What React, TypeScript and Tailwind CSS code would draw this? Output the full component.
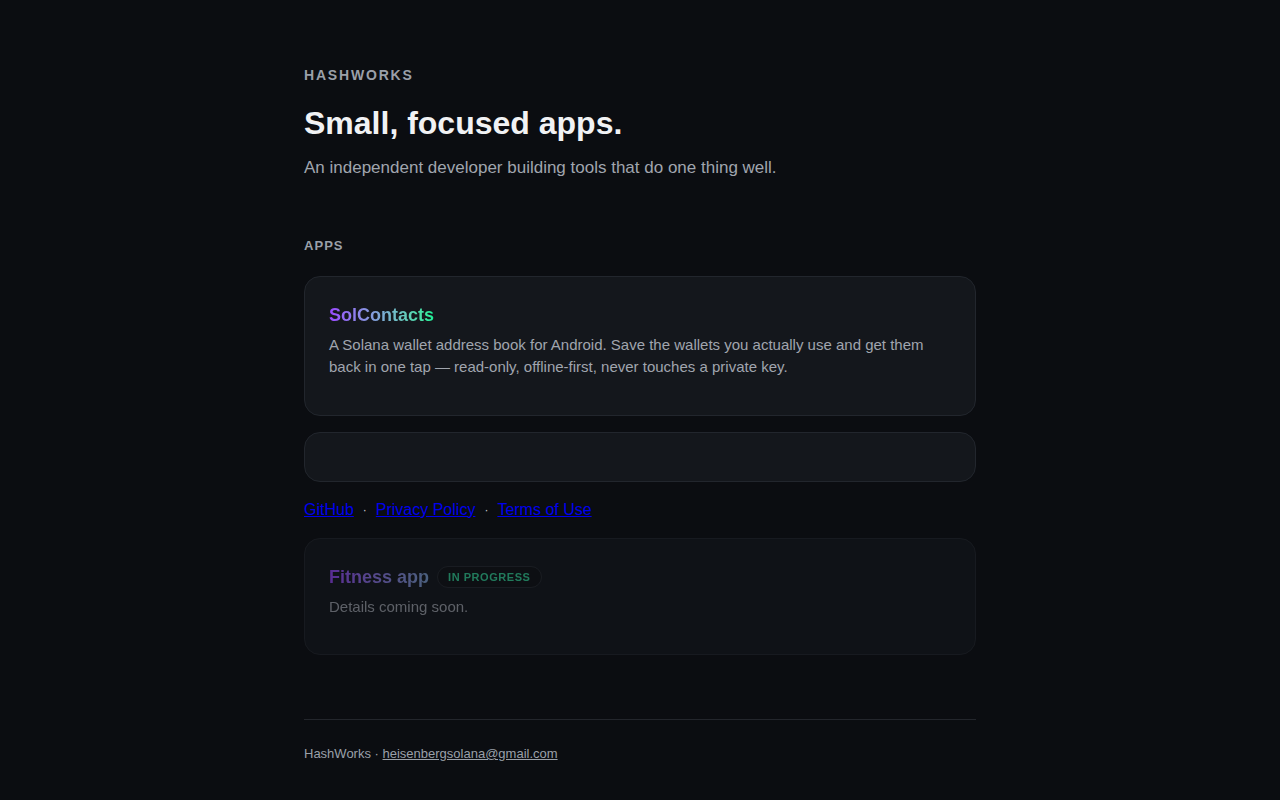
export default function App() {
  return (
    <div className="min-h-screen bg-[#0b0d11] font-['Liberation_Sans',Arial,sans-serif] text-[#e8eaed]">
      <main className="mx-auto max-w-[672px] pt-[65px] pb-9">
        <header>
          <p className="text-[14px] font-bold leading-[21px] tracking-[0.13em] text-[#9aa0a9]">HASHWORKS</p>
          <h1 className="mt-[17px] text-[32px] font-bold leading-[40px] text-[#f1f2f4]">Small, focused apps.</h1>
          <p className="mt-3 text-[17px] leading-[26px] text-[#a0a5ae]">
            An independent developer building tools that do one thing well.
          </p>
        </header>

        <section className="mt-14">
          <h2 className="text-[13px] font-bold leading-[18px] tracking-[0.08em] text-[#9aa0a9]">APPS</h2>

          <div className="mt-[21px] flex flex-col gap-4">
            <div className="rounded-2xl border border-[#22262d] bg-[#14171c] px-6 pt-[25px] pb-6">
              <h3 className="inline-block bg-gradient-to-r from-[#9945FF] to-[#14F195] bg-clip-text text-[18px] font-bold leading-[26px] text-transparent">
                SolContacts
              </h3>
              <p className="mt-1.5 mb-[13px] text-[15px] leading-[22px] text-[#a0a5ae]">
                A Solana wallet address book for Android. Save the wallets you actually use and get them back in one
                tap — read-only, offline-first, never touches a private key.
              </p>
            </div>

            <div className="h-[50px] rounded-2xl border border-[#22262d] bg-[#14171c]" />

            <div className="flex items-center text-[16px] leading-[24px]">
              <a href="#" className="text-[#0000ee] underline">GitHub</a>
              <span className="mx-[9px] text-[12px] text-[#c8cbd0]">·</span>
              <a href="#" className="text-[#0000ee] underline">Privacy Policy</a>
              <span className="mx-[9px] text-[12px] text-[#c8cbd0]">·</span>
              <a href="#" className="text-[#0000ee] underline">Terms of Use</a>
            </div>

            <div className="rounded-2xl border border-[#22262d] bg-[#14171c] px-6 pt-[25px] pb-6 opacity-55">
              <h3 className="inline-flex items-center gap-2 bg-gradient-to-r from-[#9945FF] to-[#14F195] bg-clip-text text-[18px] font-bold leading-[26px] text-transparent">
                <span>Fitness app</span>
                <span className="rounded-full border border-[#262a31] bg-[#0f1216] px-2.5 py-[3px] text-[11px] font-bold leading-[14px] tracking-[0.05em] text-[#34d399]">
                  IN PROGRESS
                </span>
              </h3>
              <p className="mt-1.5 mb-3 text-[15px] leading-[22px] text-[#a0a5ae]">Details coming soon.</p>
            </div>
          </div>
        </section>

        <footer className="mt-16 border-t border-[#23262c] pt-6 text-[13px] leading-[20px] text-[#9aa0a9]">
          HashWorks ·{" "}
          <a href="#" className="underline">
            heisenbergsolana@gmail.com
          </a>
        </footer>
      </main>
    </div>
  );
}
